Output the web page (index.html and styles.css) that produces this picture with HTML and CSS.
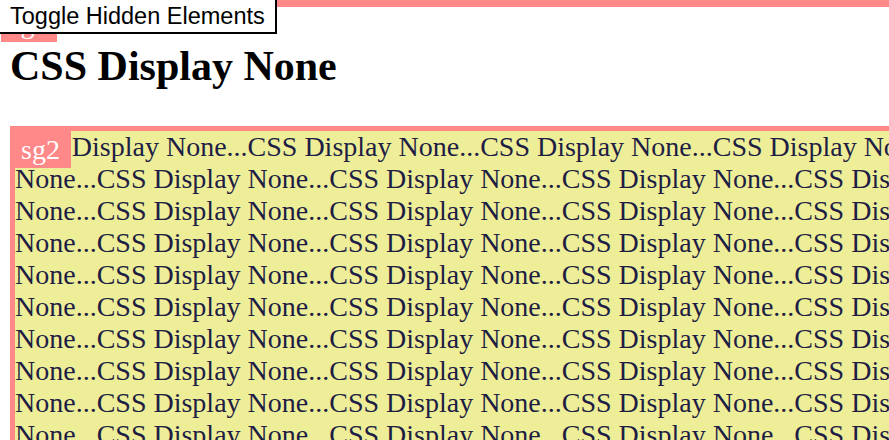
FILE: index.html
```html
<!DOCTYPE html>
<html>
<head>
<meta charset="utf-8">
<title>CSS Display None</title>
<link rel="stylesheet" href="styles.css">
</head>
<body>
<section class="sg sg1">
  <span class="label label1">sg1</span>
  <h1 class="title">CSS Display None</h1>
</section>
<section class="sg sg2">
  <span class="label label2">sg2</span>
  <p class="filler">CSS Display None...CSS Display None...CSS Display None...CSS Display None...CSS Display None...CSS Display None...CSS Display None...CSS Display None...CSS Display None...CSS Display None...CSS Display None...CSS Display None...CSS Display None...CSS Display None...CSS Display None...CSS Display None...CSS Display None...CSS Display None...CSS Display None...CSS Display None...CSS Display None...CSS Display None...CSS Display None...CSS Display None...CSS Display None...CSS Display None...CSS Display None...CSS Display None...CSS Display None...CSS Display None...CSS Display None...CSS Display None...CSS Display None...CSS Display None...CSS Display None...CSS Display None...CSS Display None...CSS Display None...CSS Display None...CSS Display None...CSS Display None...CSS Display None...CSS Display None...CSS Display None...CSS Display None...CSS Display None...CSS Display None...CSS Display None...CSS Display None...CSS Display None...CSS Display None...CSS Display None...CSS Display None...CSS Display None...CSS Display None...CSS Display None...CSS Display None...CSS Display None...CSS Display None...CSS Display None...CSS Display None...CSS Display None...CSS Display None...CSS Display None...CSS Display None...CSS Display None...</p>
</section>
<button class="toggle" type="button">Toggle Hidden Elements</button>
</body>
</html>
```

FILE: styles.css
```css
html {
  overflow: hidden;
}

body {
  margin: 0;
  font-family: "Liberation Serif", "Times New Roman", serif;
  background: #ffffff;
  color: #000000;
}

.sg {
  position: relative;
}

.sg1 {
  border-top: 7px solid #ff8888;
  padding: 35px 10px 36px;
}

.title {
  margin: 0;
  font-size: 42px;
  font-weight: bold;
  line-height: 48px;
}

.sg2 {
  margin-left: 10px;
  width: 1180px;
  border-top: 5px solid #ff8888;
  border-left: 5px solid #ff8888;
  background: #eeee99;
  color: #1e1e44;
}

.filler {
  margin: 0;
  font-size: 28px;
  line-height: 32px;
}

.label {
  position: absolute;
  box-sizing: border-box;
  height: 42px;
  padding-top: 8px;
  background: #ff8888;
  color: #ffffff;
  font-size: 28px;
  line-height: 32px;
  text-align: center;
}

.label1 {
  top: -7px;
  left: 1px;
  width: 56px;
}

.label2 {
  top: -5px;
  left: -5px;
  width: 61px;
}

.toggle {
  position: fixed;
  top: -2px;
  left: -2px;
  z-index: 2;
  box-sizing: border-box;
  height: 36px;
  margin: 0;
  padding: 0 10px;
  border: 2px solid #000000;
  border-radius: 0;
  background: #ffffff;
  color: #000000;
  font-family: "Liberation Sans", Arial, sans-serif;
  font-size: 23.5px;
}
```
